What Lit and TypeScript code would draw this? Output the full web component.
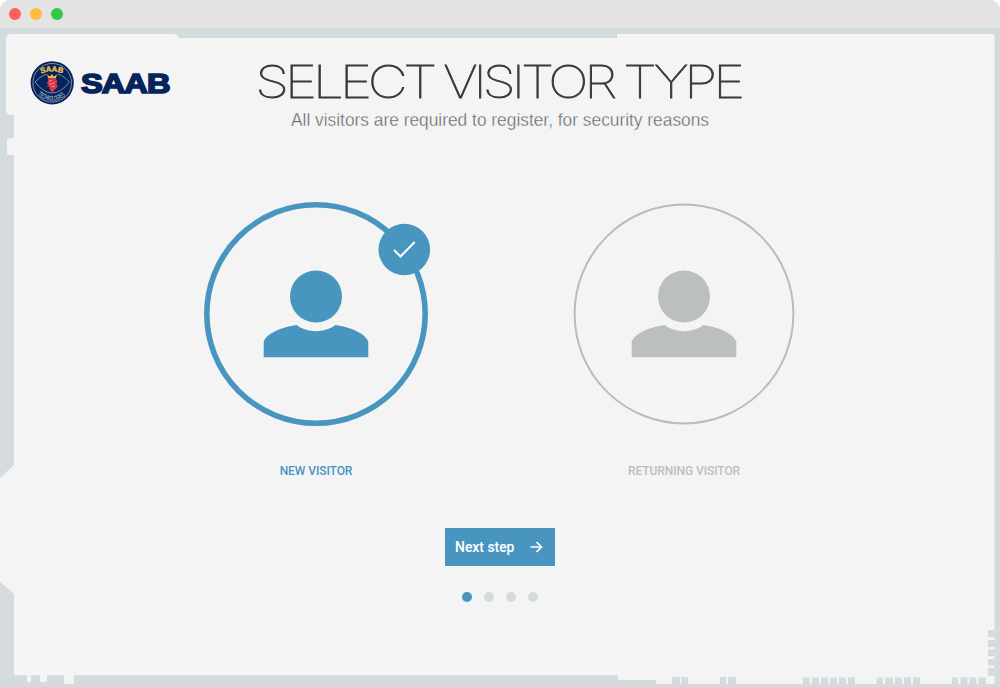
import { LitElement, html, css, svg } from "lit";
import { customElement, property, state } from "lit/decorators.js";
import { classMap } from "lit/directives/class-map.js";

type Tooth = [x: number, y: number, w: number, h: number];

const TEETH: Tooth[] = [
  [672, 677, 8, 7], [681.3, 677, 6.7, 7],
  [720, 677, 6, 7], [728, 677, 8, 7],
  [803, 677.5, 6.7, 6.5], [812, 677.5, 7, 6.5], [821, 677.5, 7, 6.5],
  [830, 677.5, 7, 6.5], [839, 677.5, 7, 6.5], [848, 677.5, 7, 6.5],
  [876.5, 677.5, 6.2, 6.5], [885.5, 677.5, 7.5, 6.5], [895, 677.5, 7, 6.5],
  [904, 677.5, 7, 6.5], [913, 677.5, 7, 6.5],
  [952, 677.5, 6.2, 6.5], [960.5, 677.5, 7, 6.5], [969.5, 677.5, 7, 6.5], [978.5, 677.5, 7.5, 6.5],
  [988, 630, 6.5, 7], [988, 640, 6.5, 7], [988, 649.3, 6.5, 7], [988, 659, 6.5, 6.5], [988, 668, 6.5, 7.8],
];

@customElement("frame-art")
class FrameArt extends LitElement {
  static styles = css`
    :host { display: block; }
    svg { display: block; }
    .panel { fill: #f4f4f4; }
    .tooth { fill: #d4dbdf; }
  `;
  render() {
    return html`<svg width="1000" height="659" viewBox="0 28 1000 659" aria-hidden="true">
      <path class="panel" d="M11 34H175Q177 34 177.700 36Q178.300 38 180 38H617V34H994.500V684H656V680H618V675.300H74V684H64V675.300H47V682H40V675.300H31V682H27V675.300H14V594L0 581.500V478L14 465V155H9Q7 155 7 153V140Q7 138 9 138H14V115H11Q6 115 6 110V39Q6 34 11 34Z"/>
      ${TEETH.map(([x, y, w, h]) => svg`<rect class="tooth" x=${x} y=${y} width=${w} height=${h}></rect>`)}
    </svg>`;
  }
}

@customElement("brand-logo")
class BrandLogo extends LitElement {
  static styles = css`
    :host { display: block; }
    svg { display: block; }
    .navy { fill: #06245a; }
    .word { font: 700 27px "Liberation Sans", sans-serif; letter-spacing: -.8px; fill: #06245a; stroke: #06245a; stroke-width: 1.7; }
    .ring { fill: none; stroke: #a9b7ca; stroke-width: .7; }
    .gold { fill: #e8bd52; }
    .top { font: 700 7.8px "Liberation Sans", sans-serif; fill: #e8bd52; stroke: #e8bd52; stroke-width: .4; }
    .bottom { font: 400 7px "Liberation Sans", sans-serif; fill: #ccd6e3; }
    .red { fill: #d9344a; }
    .pale { fill: none; stroke: #f3c3c5; stroke-width: .7; }
  `;
  render() {
    return html`<svg width="144" height="46" viewBox="29 60 144 46">
      <defs>
        <path id="up" d="M41 73.600Q52 69.800 63 73.600"/>
        <path id="down" d="M37.800 95Q52 106.500 66.200 95"/>
      </defs>
      <circle class="navy" cx="52.200" cy="82.800" r="21.600"/>
      <circle class="ring" cx="52.200" cy="82.800" r="19.300"/>
      <path class="ring" d="M35 82Q52 64 69.500 82Q52 104 35 82Z"/>
      <path class="navy" d="M40.500 67H64V74H40.500Z"/>
      <text class="top"><textPath href="#up" textLength="22" lengthAdjust="spacingAndGlyphs">SAAB</textPath></text>
      <path class="gold" d="M48.200 78.300L47 74.500L50 76.500L51.800 74L53.800 76.500L57 74.500L55.800 78.300Z"/>
      <path class="red" d="M48 78.500L55.500 78L57.300 81L56.500 84.500L58 86L55 89.500L52.500 92.500L50 90L49.300 86.500L47 87L48.500 84L46.300 83.500L48.300 81Z"/>
      <path class="pale" d="M49 81L52 80.500M51 84L55 82.500M51.500 87L55 86M49.500 83L50.500 85"/>
      <text class="bottom"><textPath href="#down" textLength="30" lengthAdjust="spacingAndGlyphs">TECHNOLOGIES</textPath></text>
      <text class="word" x="81" y="92.500" textLength="88.500" lengthAdjust="spacingAndGlyphs">SAAB</text>
    </svg>`;
  }
}

@customElement("visitor-option")
class VisitorOption extends LitElement {
  @property() label = "";
  @property({ type: Boolean, reflect: true }) selected = false;

  static styles = css`
    :host { display: flex; flex-direction: column; align-items: center; width: 230px; color: #bbbfc0; cursor: pointer; }
    :host([selected]) { color: #4896c0; }
    svg { display: block; overflow: visible; }
    .shape { fill: currentColor; }
    .ring { fill: none; stroke: #b8bcbd; stroke-width: 2; }
    :host([selected]) .ring { stroke: currentColor; stroke-width: 5.6; }
    .tick { fill: none; stroke: #fff; stroke-width: 2; }
    .label { margin-top: 33px; font: 500 12px/18px Roboto, sans-serif; letter-spacing: -.07px; white-space: nowrap; }
  `;
  render() {
    return html`
      <svg width="230" height="230" viewBox="-115 -115 230 230" aria-hidden="true">
        <circle class="ring" r=${this.selected ? 109.2 : 109.4}></circle>
        <circle class="shape" cy="-17.500" r="26"></circle>
        <path class="shape" d="M-52.300 43.300V27.500C-49 19-33.500 13-19.500 11C-14 15-7 17.200 0 17.200S14 15 19.500 11C33.500 13 49 19 52.300 27.500V43.300Z"></path>
        ${this.selected ? svg`
          <circle class="shape" cx="88.300" cy="-64.500" r="25.800"></circle>
          <path class="tick" d="M78 -64L84.500 -57.500L98.700 -72"></path>` : null}
      </svg>
      <div class="label">${this.label}</div>`;
  }
}

@customElement("app-root")
class AppRoot extends LitElement {
  @state() private choice = 0;

  static styles = css`
    :host { display: block; width: 1000px; height: 687px; background: #fff; font-family: Roboto, sans-serif; }
    .window { display: flex; flex-direction: column; height: 687px; overflow: hidden; border-radius: 10px 10px 0 0; background: #d4dbdf; }
    .titlebar { display: flex; align-items: center; gap: 9px; flex: 0 0 28px; box-sizing: border-box; padding-left: 9px; background: #e3e3e4; }
    .light { width: 12px; height: 12px; border-radius: 50%; }
    .close { background: #fc605b; }
    .min { background: #fdbc40; }
    .max { background: #34c84a; }
    .stage { display: grid; height: 659px; }
    .art, .content { grid-area: 1 / 1; }
    .content { display: flex; flex-direction: column; align-items: center; }
    .header { display: grid; grid-template-columns: 229px 542px 229px; height: 171px; align-items: start; }
    .logo { margin: 32px 0 0 29px; }
    .titles { display: block; margin-top: 27px; }
    .title { font: 100 44.5px Inter, "Liberation Sans", sans-serif; letter-spacing: -3.4px; fill: #383838; stroke: #383838; stroke-width: .8; }
    .subtitle { font: 400 18px "Liberation Sans", sans-serif; fill: #646464; stroke: #f4f4f4; stroke-width: .35; }
    .options { display: flex; gap: 138px; }
    .next { display: flex; align-items: center; justify-content: space-between; box-sizing: border-box; width: 110.5px; height: 37.5px; margin-top: 48px; padding: 0 12px 0 10.3px; border: 0; border-radius: 0; background: #4896c0; color: #fff; font: 500 13.9px Roboto, sans-serif; white-space: nowrap; }
    .arrow { fill: none; stroke: #fff; stroke-width: 1.7; }
    .dots { display: flex; gap: 12.2px; margin-top: 26px; }
    .dot { width: 10px; height: 10px; border-radius: 50%; background: #d4dbdf; }
    .on { background: #4896c0; }
  `;

  render() {
    const options = ["NEW VISITOR", "RETURNING VISITOR"];
    return html`<div class="window">
      <div class="titlebar"><span class="light close"></span><span class="light min"></span><span class="light max"></span></div>
      <div class="stage">
        <frame-art class="art"></frame-art>
        <main class="content">
          <header class="header">
            <brand-logo class="logo"></brand-logo>
            <svg class="titles" width="542" height="85" viewBox="229 55 542 85">
              <text class="title" x="255.200" y="97.600" textLength="178" lengthAdjust="spacingAndGlyphs">SELECT</text>
              <text class="title" x="443.300" y="97.600" textLength="170" lengthAdjust="spacingAndGlyphs">VISITOR</text>
              <text class="title" x="623.300" y="97.600" textLength="117.500" lengthAdjust="spacingAndGlyphs">TYPE</text>
              <text class="subtitle" x="291" y="125.500" textLength="418" lengthAdjust="spacingAndGlyphs">All visitors are required to register, for security reasons</text>
            </svg>
          </header>
          <section class="options">
            ${options.map((label, i) => html`<visitor-option .label=${label} ?selected=${this.choice === i} @click=${() => (this.choice = i)}></visitor-option>`)}
          </section>
          <button class="next">Next step
            <svg width="13" height="12" viewBox="0 0 13 12" aria-hidden="true"><path class="arrow" d="M.500 6H11.500M6.500 1L11.500 6L6.500 11"/></svg>
          </button>
          <div class="dots">${[0, 1, 2, 3].map((i) => html`<span class=${classMap({ dot: true, on: i === 0 })}></span>`)}</div>
        </main>
      </div>
    </div>`;
  }
}
